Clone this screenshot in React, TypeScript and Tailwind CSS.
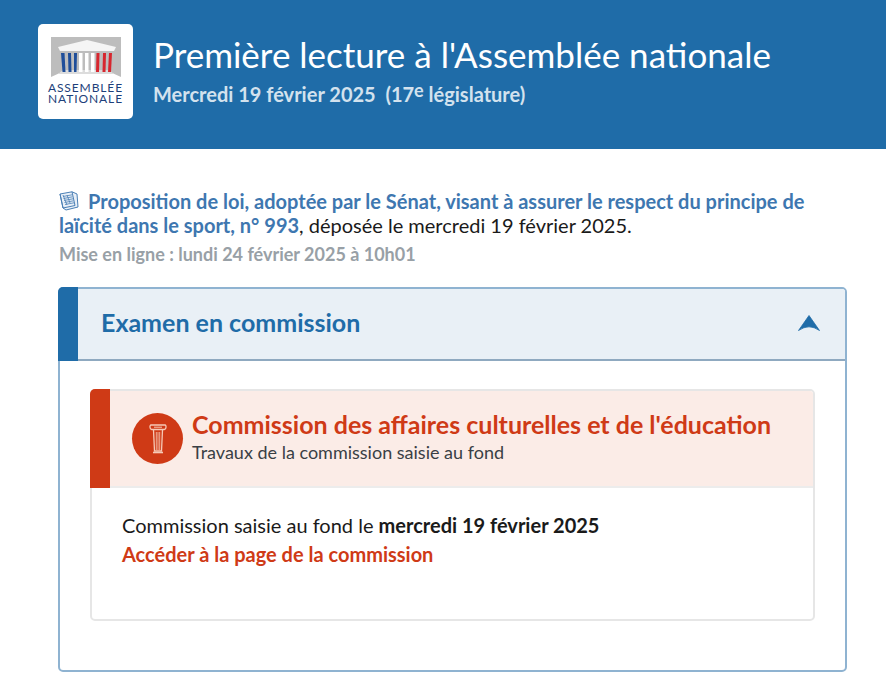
export default function App() {
  return (
    <div className="h-[680px] w-[886px] overflow-hidden bg-white font-['Lato',sans-serif] text-[#1a1a1a]">
      {/* Header */}
      <header className="flex h-[149px] items-start gap-5 bg-[#1f6ca8] pl-[38px] pt-6">
        <div className="flex h-[95px] w-[95px] flex-col items-center rounded-[5px] bg-white pt-[13px]">
          <svg width="72" height="44" viewBox="0 0 72 44">
            <path d="M1 0 H71 V40 L60 35 H12 L1 40 Z" fill="#bdbdbd" />
            <path d="M8 10 L37 3 L66 10 L64 14 H10 Z" fill="#f5f5f5" />
            <path d="M8 37 L13 33 H59 L64 37 Z" fill="#dcdcdc" />
            <g fill="#1f4e9a">
              <path d="M11 16 h3.5 l1 19 h-3 z" />
              <path d="M18 16 h3 l0.5 19 h-3 z" />
              <path d="M24 16 h3 l-0.5 19 h-2.5 z" />
            </g>
            <g fill="#ffffff">
              <rect x="29" y="16" width="3.5" height="19" />
              <rect x="35" y="16" width="3.5" height="19" />
              <rect x="41" y="16" width="3.5" height="19" />
            </g>
            <g fill="#d7262e">
              <path d="M46.5 16 h3 l-0.5 19 h-3 z" />
              <path d="M53 16 h3 l-0.5 19 h-3 z" />
              <path d="M59 16 h3 l-1 19 h-3 z" />
            </g>
          </svg>
          <div className="mt-[1px] text-center text-[12px] leading-[11px] tracking-[0.9px] text-[#1d3f7a]">
            <div>ASSEMBLÉE</div>
            <div>NATIONALE</div>
          </div>
        </div>
        <div className="pt-2 text-white">
          <h1 className="text-[35px] leading-[44px]">Première lecture à l'Assemblée nationale</h1>
          <p className="mt-[5px] text-[20px] font-bold leading-[24px] text-[#d3e2ee]">
            Mercredi 19 février 2025&nbsp; (17<sup className="top-0 align-[5px] text-[18px] leading-none">e</sup> législature)
          </p>
        </div>
      </header>

      <main className="pl-[58px] pr-10 pt-[40px]">
        <p className="w-[770px] pl-px text-[20px] leading-[24px]">
          <svg className="relative -top-[3px] -my-2 mr-[9px] inline-block" width="20" height="20" viewBox="0 0 20 20" fill="none" stroke="#4a7fb5">
            <path d="M1 3 L13 0.8 L18 3 L19 16 L7 19 L4 17 Z" fill="#e8eff7" strokeWidth="1" />
            <path d="M1 3 L4 17 L16 14.5 L13 0.8" strokeWidth="1" />
            <path d="M4 5.5 L13 3.8 M4.5 7.5 L13.5 5.8 M5 9.5 L14 7.8 M5.5 11.5 L14.5 9.8 M6 13.5 L15 11.8 M4 4 L8 14 M8 4 L11 12" strokeWidth="0.8" />
          </svg>
          <a className="font-bold text-[#3e77b0]">
            Proposition de loi, adoptée par le Sénat, visant à assurer le respect du principe de laïcité dans le sport, n° 993
          </a>
          , déposée le mercredi 19 février 2025.
        </p>
        <p className="mt-[5px] pl-px text-[18px] font-bold leading-[24px] text-[#98a0a6]">
          Mise en ligne : lundi 24 février 2025 à 10h01
        </p>

        {/* Examen en commission */}
        <section className="mt-[21px] h-[385px] w-[789px] rounded-[5px] border-2 border-[#8fb3d1]">
          <div className="flex h-[72px] rounded-t-[3px] border-b-2 border-[#8fa9c0] bg-[#e9f0f6]">
            <div className="-my-[2px] -ml-[2px] w-5 rounded-tl-[5px] bg-[#1f6ca8]" />
            <div className="flex flex-1 items-center justify-between pb-[3px] pl-[23px] pr-[25px]">
              <h2 className="text-[25px] font-bold text-[#1f6ca8]">Examen en commission</h2>
              <svg width="22" height="16" viewBox="0 0 22 16">
                <path d="M11 0.5 L21.5 15.5 Q16 11.8 11 11.8 Q6 11.8 0.5 15.5 Z" fill="#1f6ca8" stroke="#1f6ca8" strokeWidth="0.8" />
              </svg>
            </div>
          </div>

          <div className="px-[30px] pt-[28px]">
            <div className="h-[232px] w-[725px] rounded-[5px] border-2 border-[#e6e6e6]">
              <div className="flex h-[97px] rounded-t-[3px] border-b-2 border-[#ececec] bg-[#fbece7]">
                <div className="-my-[2px] -ml-[2px] w-5 rounded-tl-[5px] bg-[#cf3a16]" />
                <div className="flex flex-1 items-center gap-[9px] pl-[22px]">
                  <div className="flex h-[51px] w-[51px] items-center justify-center rounded-full bg-[#cf3a16]">
                    <svg width="18" height="32" viewBox="0 0 18 32" fill="none" stroke="#f6c9b6" strokeWidth="1.3">
                      <path d="M2 2 H16 C17.5 2 17.5 6.5 15 6.5 H3 C0.5 6.5 0.5 2 2 2 Z" />
                      <path d="M5 4.2 H13" strokeWidth="1" />
                      <path d="M4.5 7 L5.5 28 H12.5 L13.5 7" />
                      <path d="M7.3 9 V27 M9 9 V27 M10.7 9 V27" strokeWidth="0.8" />
                      <path d="M4 29.5 H14" strokeWidth="1.6" />
                    </svg>
                  </div>
                  <div className="-mt-[3px]">
                    <h3 className="text-[25px] font-bold leading-[25px] text-[#cf3a16]">
                      Commission des affaires culturelles et de l'éducation
                    </h3>
                    <p className="mt-1 text-[18px] leading-[22px] text-[#3a3f45]">Travaux de la commission saisie au fond</p>
                  </div>
                </div>
              </div>
              <div className="pl-[30px] pt-[23px] text-[20px] leading-[29px]">
                <p>
                  Commission saisie au fond le <strong>mercredi 19 février 2025</strong>
                </p>
                <a className="font-bold text-[#cf3a16]">Accéder à la page de la commission</a>
              </div>
            </div>
          </div>
        </section>
      </main>
    </div>
  );
}
